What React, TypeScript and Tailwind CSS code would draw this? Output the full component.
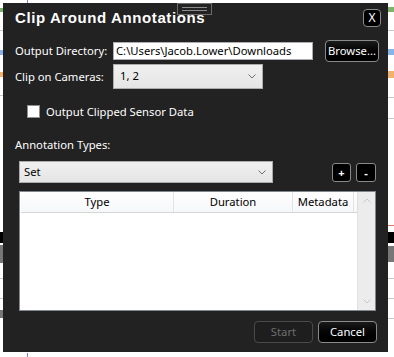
import React from "react";

function Chevron({ className = "" }: { className?: string }) {
  return (
    <svg width="8" height="5" viewBox="0 0 8 5" className={className}>
      <path d="M0.5 0.5 L4 4 L7.5 0.5" fill="none" stroke="currentColor" strokeWidth="1" />
    </svg>
  );
}

function BgStrips() {
  return (
    <>
      {/* left */}
      <div className="absolute left-0 top-[8px] w-[3px] h-[4px] bg-[#7fb26a]" />
      <div className="absolute left-0 top-[30px] w-[3px] h-[1px] bg-[#c8c8c8]" />
      <div className="absolute left-0 top-[50px] w-[3px] h-[5px] bg-[#8ab4e8]" />
      <div className="absolute left-0 top-[72px] w-[3px] h-[5px] bg-[#f3b26b]" />
      <div className="absolute left-0 top-[95px] w-[3px] h-[1px] bg-[#c8c8c8]" />
      <div className="absolute left-0 top-[232px] w-[3px] h-[11px] bg-black" />
      <div className="absolute left-0 top-[245px] w-[3px] h-[18px] bg-[#777]" />
      <div className="absolute left-0 top-[278px] w-[3px] h-[1px] bg-[#c8c8c8]" />
      <div className="absolute left-0 top-[298px] w-[3px] h-[1px] bg-[#c8c8c8]" />
      <div className="absolute left-0 top-[310px] w-[3px] h-[8px] bg-[#777]" />
      {/* right */}
      <div className="absolute left-[388px] top-[7px] w-[6px] h-[5px] bg-[#7fb26a]" />
      <div className="absolute left-[388px] top-[30px] w-[6px] h-[1px] bg-[#c8c8c8]" />
      <div className="absolute left-[388px] top-[49px] w-[6px] h-[6px] bg-[#8ab4e8]" />
      <div className="absolute left-[388px] top-[71px] w-[6px] h-[7px] bg-[#f3b26b]" />
      <div className="absolute left-[388px] top-[97px] w-[6px] h-[1px] bg-[#c8c8c8]" />
      <div className="absolute left-[388px] top-[118px] w-[6px] h-[1px] bg-[#c8c8c8]" />
      <div className="absolute left-[388px] top-[225px] w-[6px] h-[1px] bg-[#e57373]" />
      <div className="absolute left-[388px] top-[232px] w-[6px] h-[11px] bg-black" />
      <div className="absolute left-[388px] top-[246px] w-[6px] h-[16px] bg-[#777]" />
      <div className="absolute left-[388px] top-[278px] w-[6px] h-[1px] bg-[#c8c8c8]" />
      <div className="absolute left-[388px] top-[298px] w-[6px] h-[1px] bg-[#c8c8c8]" />
      <div className="absolute left-[388px] top-[318px] w-[6px] h-[1px] bg-[#c8c8c8]" />
      {/* top / bottom purple dashes */}
      <div className="absolute left-[27px] top-0 w-[1px] h-[3px] bg-[#8b7fd6]" />
      <div className="absolute left-[27px] top-[353px] w-[1px] h-[4px] bg-[#8b7fd6]" />
    </>
  );
}

export default function App() {
  return (
    <div className="relative w-[394px] h-[357px] bg-white overflow-hidden font-['Noto_Sans',sans-serif] text-[11.25px]">
      <BgStrips />
      <div className="absolute left-[3px] top-[3px] w-[385px] h-[349px] bg-[#222222] text-white">
        {/* grip */}
        <div className="absolute left-[174px] top-0 w-[35px] h-[12px] border border-[#6a6a6a] flex flex-col items-center justify-center gap-[2px]">
          <div className="w-[25px] h-[1px] bg-[#8a8a8a]" />
          <div className="w-[25px] h-[1px] bg-[#8a8a8a]" />
        </div>

        {/* title row */}
        <div className="flex items-start justify-between pl-[12px] pr-[7px] pt-[5px] h-[36px]">
          <div className="font-['Liberation_Sans',sans-serif] font-bold text-[15px] leading-[20px] tracking-[0.6px] whitespace-nowrap">
            Clip Around Annotations
          </div>
          <div className="mt-[1px] w-[18px] h-[18px] rounded-[4px] border border-[#8a8a8a] bg-black flex items-center justify-center text-[12px] leading-none">
            X
          </div>
        </div>

        {/* Output directory */}
        <div className="flex items-center h-[22px] mt-[1px] pl-[12px]">
          <div className="w-[98px] leading-[16px] whitespace-nowrap">Output Directory:</div>
          <div className="w-[200px] h-[18px] bg-white border border-[#abadb3] text-black px-[2px] leading-[16px] whitespace-nowrap overflow-hidden">
            C:\Users\Jacob.Lower\Downloads
          </div>
          <div className="ml-[12px] w-[54px] h-[22px] rounded-[4px] border border-[#8a8a8a] bg-gradient-to-b from-[#1a1a1a] to-black flex items-center justify-center whitespace-nowrap">
            Browse...
          </div>
        </div>

        {/* Clip on cameras */}
        <div className="flex items-center h-[25px] mt-[2px] pl-[12px]">
          <div className="w-[98px] leading-[16px] whitespace-nowrap">Clip on Cameras:</div>
          <div className="w-[150px] h-[25px] border border-[#acacac] bg-gradient-to-b from-[#f0f0f0] to-[#e5e5e5] text-black flex items-center justify-between pl-[6px] pr-[6px]">
            <span>1, 2</span>
            <Chevron className="text-[#707070]" />
          </div>
        </div>

        {/* checkbox */}
        <div className="flex items-center h-[13px] mt-[16px] pl-[24px]">
          <div className="w-[13px] h-[13px] bg-white border border-[#8f8f8f]" />
          <div className="ml-[6px] leading-[16px] whitespace-nowrap">Output Clipped Sensor Data</div>
        </div>

        {/* Annotation types */}
        <div className="pl-[12px] mt-[19px] h-[16px] leading-[16px]">Annotation Types:</div>

        <div className="flex items-center mt-[8px] pl-[16px] h-[22px]">
          <div className="w-[254px] h-[22px] border border-[#acacac] bg-gradient-to-b from-[#f0f0f0] to-[#e5e5e5] text-black flex items-center justify-between pl-[4px] pr-[6px]">
            <span>Set</span>
            <Chevron className="text-[#707070]" />
          </div>
          <div className="ml-[59px] w-[19px] h-[19px] rounded-[3px] border border-[#8a8a8a] bg-black flex items-center justify-center text-[11px] font-bold leading-none">
            +
          </div>
          <div className="ml-[5px] w-[20px] h-[19px] rounded-[3px] border border-[#8a8a8a] bg-black flex items-center justify-center text-[11px] font-bold leading-none">
            -
          </div>
        </div>

        {/* List */}
        <div className="ml-[16px] mt-[8px] w-[357px] h-[120px] border border-[#828790] bg-white flex text-black">
          <div className="flex-1 flex flex-col">
            <div className="flex h-[21px] border-b border-[#d5d5d5] bg-gradient-to-b from-white to-[#f6f7f9] ml-[1px]">
              <div className="w-[153px] border-r border-[#e3e3e3] flex items-center justify-center leading-[16px]">Type</div>
              <div className="w-[119px] border-r border-[#e3e3e3] flex items-center justify-center leading-[16px]">Duration</div>
              <div className="w-[61px] border-r border-[#e3e3e3] flex items-center justify-center leading-[16px]">Metadata</div>
            </div>
          </div>
          <div className="w-[18px] bg-[#ececec] flex flex-col items-center justify-between py-[6px] border-l border-[#e0e0e0]">
            <Chevron className="text-[#c8c8c8] rotate-180" />
            <Chevron className="text-[#c8c8c8]" />
          </div>
        </div>

        {/* bottom buttons */}
        <div className="flex justify-end pr-[11px] mt-[10px] gap-[5px]">
          <div className="w-[59px] h-[22px] rounded-[4px] border border-[#4a4a4a] bg-[#1e1e1e] text-[#6f6f6f] flex items-center justify-center">
            Start
          </div>
          <div className="w-[59px] h-[22px] rounded-[4px] border border-[#8a8a8a] bg-gradient-to-b from-[#1a1a1a] to-black flex items-center justify-center">
            Cancel
          </div>
        </div>
      </div>
    </div>
  );
}
